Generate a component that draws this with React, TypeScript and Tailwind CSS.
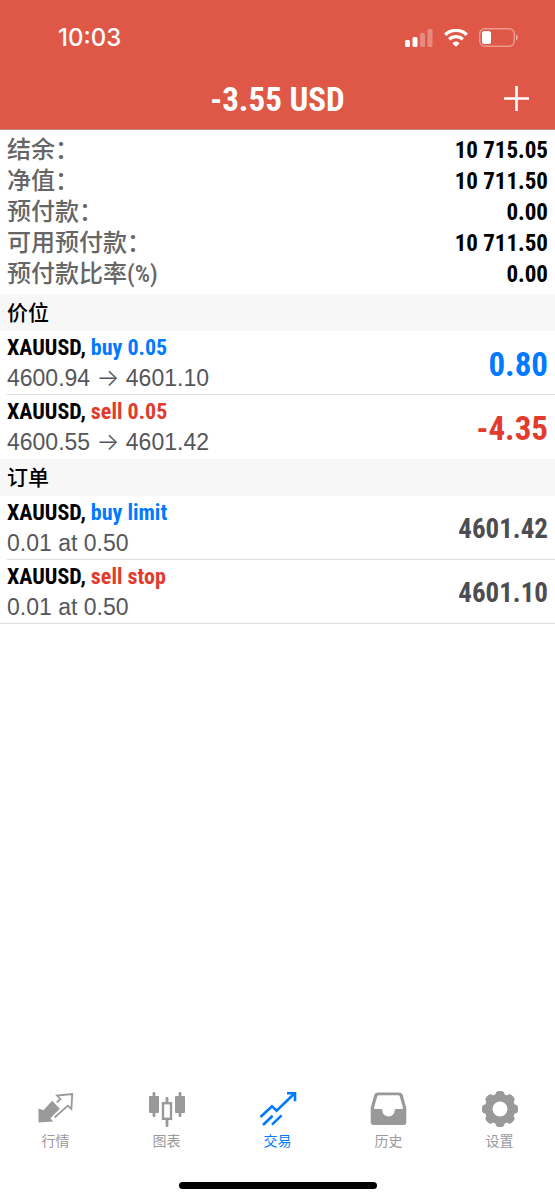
import type { ReactNode } from "react";
import clsx from "clsx";

const SUMMARY = [
  { label: "结余：", value: "10 715.05" },
  { label: "净值：", value: "10 711.50" },
  { label: "预付款：", value: "0.00" },
  { label: "可用预付款：", value: "10 711.50" },
  { label: "预付款比率(%)", value: "0.00" },
];

type Entry = {
  id: string;
  symbol: string;
  side: "buy" | "sell";
  action: string;
  details: ReactNode;
  value: string;
};

const Arrow = () => <span className="font-['Inter',sans-serif] text-2xl leading-none font-light">→</span>;

const POSITIONS: Entry[] = [
  {
    id: "position-1",
    symbol: "XAUUSD",
    side: "buy",
    action: "buy 0.05",
    details: <>4600.94 <Arrow /> 4601.10</>,
    value: "0.80",
  },
  {
    id: "position-2",
    symbol: "XAUUSD",
    side: "sell",
    action: "sell 0.05",
    details: <>4600.55 <Arrow /> 4601.42</>,
    value: "-4.35",
  },
];

const ORDERS: Entry[] = [
  {
    id: "order-1",
    symbol: "XAUUSD",
    side: "buy",
    action: "buy limit",
    details: "0.01 at 0.50",
    value: "4601.42",
  },
  {
    id: "order-2",
    symbol: "XAUUSD",
    side: "sell",
    action: "sell stop",
    details: "0.01 at 0.50",
    value: "4601.10",
  },
];

const SignalIcon = () => (
  <svg width="28" height="18" viewBox="0 0 28 18" fill="currentColor">
    <rect x="0" y="11" width="5" height="7" rx="1.5" />
    <rect x="7.5" y="8" width="5" height="10" rx="1.5" />
    <rect x="15" y="4" width="5" height="14" rx="1.5" opacity="0.3" />
    <rect x="22.5" y="0" width="5" height="18" rx="1.5" opacity="0.3" />
  </svg>
);

const WifiIcon = () => (
  <svg width="24" height="18" viewBox="0 0 24 18" fill="none" stroke="currentColor" strokeWidth="3.4">
    <path d="M1.2 5.8a15.4 15.4 0 0 1 21.6 0" />
    <path d="M5.2 10.4a9.7 9.7 0 0 1 13.6 0" />
    <path d="M12 17.8 8.3 14.2a5 5 0 0 1 7.4 0Z" fill="currentColor" stroke="none" />
  </svg>
);

const BatteryIcon = () => (
  <svg width="39" height="19" viewBox="0 0 39 19" fill="none">
    <rect x="0.7" y="0.7" width="34.6" height="17.6" rx="5" stroke="currentColor" strokeWidth="1.4" opacity="0.4" />
    <rect x="3" y="3" width="9" height="13" rx="2.5" fill="currentColor" />
    <path d="M37 6.5c2.4 1 2.4 5 0 6Z" fill="currentColor" opacity="0.5" />
  </svg>
);

const QuotesIcon = () => (
  <svg width="36" height="36" viewBox="0 0 36 36" fill="none">
    <path d="M.5 17.5v14l14.700-1-2.800-3.200 9.400-9.600-7.600-8L5.400 19.200Z" fill="currentColor" />
    <path
      d="m18.8 11.4 3.6-3.2-3.4-3.7 15.2-1.5-.8 15-3.6-3.3-13.2 11.8"
      stroke="currentColor"
      strokeWidth="1.8"
    />
  </svg>
);

const ChartsIcon = () => (
  <svg width="38" height="38" viewBox="0 0 38 38" fill="currentColor">
    <rect x="1" y="6" width="10" height="17" rx="1" />
    <rect x="4.6" y="2" width="2.8" height="25" rx="1.2" />
    <rect x="27" y="6" width="10" height="17" rx="1" />
    <rect x="30.6" y="2" width="2.8" height="25" rx="1.2" />
    <rect x="17.6" y="7" width="2.8" height="6" rx="1.2" />
    <rect x="17.6" y="29" width="2.8" height="8" rx="1.2" />
    <rect x="15" y="13.2" width="8" height="15.6" fill="none" stroke="currentColor" strokeWidth="2.4" />
  </svg>
);

const TradeIcon = () => (
  <svg width="38" height="36" viewBox="0 0 38 36" fill="none" stroke="currentColor" strokeWidth="2.6">
    <path d="M1.5 26 13 15.2l4.6 4.4L35 3" />
    <path d="M28 2.3h8v8" />
    <path d="m4 34 9.6-9.2M13 33.6l9.6-9.2" />
  </svg>
);

const HistoryIcon = () => (
  <svg width="37" height="34" viewBox="0 0 37 34" fill="currentColor" fillRule="evenodd">
    <path d="M8 .5h21a4 4 0 0 1 3.8 2.8l3.4 12.2a4 4 0 0 1 .1 1.3V30a3 3 0 0 1-3 3H3.7a3 3 0 0 1-3-3V16.8a4 4 0 0 1 .1-1.3L4.2 3.3A4 4 0 0 1 8 .5Zm1.2 2.7a2 2 0 0 0-2 1.4L4.1 15.6a1 1 0 0 0 1 1.4H11a1.3 1.3 0 0 1 1.3 1.3a6.2 6.2 0 0 0 12.4 0a1.3 1.3 0 0 1 1.3-1.3h5.9a1 1 0 0 0 1-1.4L29.8 4.6a2 2 0 0 0-2-1.4Z" />
  </svg>
);

const TEETH = [0, 45, 90, 135, 180, 225, 270, 315];

const SettingsIcon = () => (
  <svg width="36" height="36" viewBox="-18 -18 36 36" fill="currentColor">
    <circle r="11.4" fill="none" stroke="currentColor" strokeWidth="7.8" />
    {TEETH.map((angle) => (
      <rect key={angle} x="-4.5" y="-18" width="9" height="8" rx="3.5" transform={`rotate(${angle})`} />
    ))}
  </svg>
);

const TABS = [
  { label: "行情", Icon: QuotesIcon },
  { label: "图表", Icon: ChartsIcon },
  { label: "交易", Icon: TradeIcon, active: true },
  { label: "历史", Icon: HistoryIcon },
  { label: "设置", Icon: SettingsIcon },
];

const SectionTitle = ({ children }: { children: ReactNode }) => (
  <h2 className="bg-[#f7f7f7] px-[7px] pt-[5px] pb-[3px] text-[21px] leading-[29px] font-medium text-black">
    {children}
  </h2>
);

const EntryRow = ({ entry, valueClassName }: { entry: Entry; valueClassName: string }) => (
  <li className="group pl-[7px] last:pl-0">
    <div className="flex h-16 items-center justify-between border-b border-[#dedede] pr-[7px] group-last:border-(--list-end) group-last:pl-[7px]">
      <div>
        <p className="text-[22px] leading-[30px] font-bold">
          {entry.symbol},{" "}
          <span className={entry.side === "buy" ? "text-[#007aff]" : "text-[#e23b2e]"}>
            {entry.action}
          </span>
        </p>
        <p className="font-['Liberation_Sans','Noto_Sans_CJK_SC',sans-serif] text-[23px] leading-[30px] text-[#55565a]">
          {entry.details}
        </p>
      </div>
      <p className={clsx("pt-1 font-bold", valueClassName)}>{entry.value}</p>
    </div>
  </li>
);

export default function App() {
  return (
    <div className="flex min-h-screen flex-col bg-white font-['Roboto_Condensed','Roboto','Noto_Sans_CJK_SC',sans-serif] text-black">
      <header className="border-b border-[#c08a84] bg-[#df5747] text-white">
        <div className="flex h-[68px] items-center justify-between pt-[7px] pr-[37px] pl-[58px]">
          <time className="font-['Inter',sans-serif] text-2xl font-medium">10:03</time>
          <div className="flex items-center gap-[11px]">
            <SignalIcon />
            <WifiIcon />
            <BatteryIcon />
          </div>
        </div>
        <div className="grid h-[61px] grid-cols-[1fr_auto_1fr] items-center px-[25px] pb-px">
          <h1 className="col-start-2 pt-[3px] text-[33px] leading-10 font-bold">-3.55 USD</h1>
          <button type="button" aria-label="New order" className="justify-self-end">
            <svg width="27" height="27" viewBox="0 0 27 27" stroke="currentColor" strokeWidth="2.6">
              <path d="M13.5 1v25M1 13.5h25" />
            </svg>
          </button>
        </div>
      </header>

      <main className="flex-1">
        <dl className="flex flex-col px-[7px] pt-[5px] pb-1">
          {SUMMARY.map(({ label, value }) => (
            <div key={label} className="flex items-center justify-between">
              <dt className="text-2xl leading-[31px] font-medium text-[#666]">{label}</dt>
              <dd className="text-[23px] leading-[31px] font-bold">{value}</dd>
            </div>
          ))}
        </dl>

        <section>
          <SectionTitle>价位</SectionTitle>
          <ul className="[--list-end:transparent]">
            {POSITIONS.map((entry) => (
              <EntryRow
                key={entry.id}
                entry={entry}
                valueClassName={clsx(
                  "text-[33px]",
                  entry.side === "buy" ? "text-[#007aff]" : "text-[#e23b2e]",
                )}
              />
            ))}
          </ul>
        </section>

        <section>
          <SectionTitle>订单</SectionTitle>
          <ul className="[--list-end:#dedede]">
            {ORDERS.map((entry) => (
              <EntryRow
                key={entry.id}
                entry={entry}
                valueClassName="text-[27px] text-[#4c4d51]"
              />
            ))}
          </ul>
        </section>
      </main>

      <footer className="flex flex-col items-center pb-[11px]">
        <nav className="grid w-full grid-cols-5">
          {TABS.map(({ label, Icon, active }) => (
            <a
              key={label}
              href="#"
              className={clsx(
                "flex flex-col items-center gap-0.5 text-sm",
                active ? "text-[#007aff]" : "text-[#999]",
              )}
            >
              <span className="flex h-10 items-center">
                <Icon />
              </span>
              {label}
            </a>
          ))}
        </nav>
        <div className="mt-[31px] h-[7px] w-[198px] rounded-full bg-black" />
      </footer>
    </div>
  );
}
